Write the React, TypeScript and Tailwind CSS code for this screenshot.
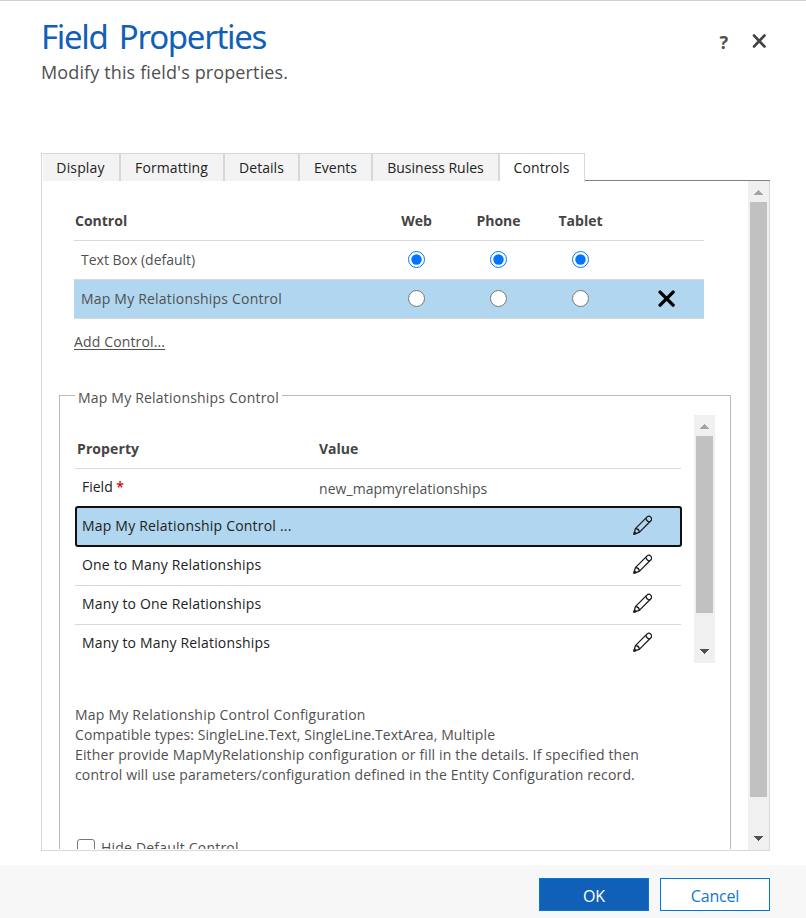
import React from "react";

function ScrollBar({ thumb, className }: { thumb: string; className: string }) {
  return (
    <div className={"flex w-[21px] shrink-0 flex-col items-center bg-[#f0f0f0] " + className}>
      <svg className="h-[21px] w-[21px] shrink-0" viewBox="0 0 21 21" shapeRendering="crispEdges">
        <path d="M6 14 L10.5 9 L15 14 Z" fill="#a3a3a3" />
      </svg>
      <div className={"w-[17px] bg-[#c1c1c1] " + thumb} />
      <svg className="mt-auto h-[21px] w-[21px] shrink-0" viewBox="0 0 21 21" shapeRendering="crispEdges">
        <path d="M6 7 L10.5 12 L15 7 Z" fill="#505050" />
      </svg>
    </div>
  );
}

function Radio({ on = false }: { on?: boolean }) {
  return (
    <span className="flex justify-center pb-px">
      <svg className="block h-[17px] w-[17px]" viewBox="0 0 17 17">
        <circle cx="8.5" cy="8.5" r="8" fill="#fff" stroke={on ? "#0075ff" : "#767676"} strokeWidth="1" />
        {on && <circle cx="8.5" cy="8.5" r="5.2" fill="#0075ff" />}
      </svg>
    </span>
  );
}

function Pencil() {
  return (
    <svg className="mb-[4px] block h-5 w-[19px]" viewBox="0 0 19 20" fill="none" stroke="#1c1c1c" strokeWidth="1.3" strokeLinejoin="round">
      <path d="M0.9 19.1 L2.4 13.6 L14.1 1.9 C16.6 -0.2 20 3.2 17.9 5.8 L6.3 17.4 Z" />
      <path d="M2.4 13.6 C4.6 13.6 6.3 15.2 6.3 17.4 M12.9 3.1 C13.2 5.4 14.5 6.7 16.8 6.9" />
      <path d="M0.9 19.1 L1.5 16.9 L3.1 18.5 Z" fill="#1c1c1c" />
    </svg>
  );
}

const tabs = [
  { label: "Display", box: "w-[76px]", text: "tracking-[0.15px] pr-px" },
  { label: "Formatting", box: "w-[102px]", text: "tracking-[0.1px] pr-px" },
  { label: "Details", box: "w-[73px]", text: "tracking-[0.05px]" },
  { label: "Events", box: "w-[71px]", text: "tracking-[0.05px]" },
  { label: "Business Rules", box: "w-[125px]", text: "tracking-[0px]" },
];

const relations = ["One to Many Relationships", "Many to One Relationships", "Many to Many Relationships"];

const columns = "grid grid-cols-[301px_82px_82px_82px_82px] items-center";

export default function App() {
  return (
    <div className="flex h-[918px] w-[806px] flex-col overflow-hidden border-t border-[#d2d2d2] bg-white font-['Open_Sans','Noto_Sans',sans-serif] text-[14px] leading-5 text-[#505050]">
      <header className="flex h-[152px] shrink-0 justify-between pl-[41px] pr-[39px]">
        <div className="pt-[13px]">
          <h1 className="whitespace-nowrap font-['Noto_Sans',sans-serif] text-[33px] leading-[46px] tracking-[-1.3px] text-[#1160b7] [word-spacing:4px]">Field Properties</h1>
          <p className="whitespace-nowrap text-[18px] leading-6 tracking-[0.13px]">Modify this field's properties.</p>
        </div>
        <div className="flex items-start pt-[33px]">
          <span className="mr-[24px] pt-px font-['Noto_Sans',sans-serif] text-[18px] font-bold leading-[15px] text-[#505050]">?</span>
          <svg className="h-[15px] w-[15px]" viewBox="0 0 15 15" stroke="#444" strokeWidth="2.6" strokeLinecap="round">
            <path d="M2 1.5 L12.5 12.5 M12.5 1.5 L2 12.5" />
          </svg>
        </div>
      </header>

      <nav className="ml-[41px] flex h-7 w-[729px] shrink-0 text-[#222]">
        <div className="flex border-l border-t border-[#d8d8d8] pl-px">
          {tabs.map((t) => (
            <div key={t.label} className="flex h-[27px] border-r-2 border-[#d8d8d8] bg-[#f3f3f3]">
              <span className={"whitespace-nowrap text-center leading-[27px] " + t.box + " " + t.text}>{t.label}</span>
            </div>
          ))}
          <div className="flex h-[28px] w-[85px] justify-center border-r border-[#d8d8d8] bg-white pr-px leading-[27px] tracking-[0.1px]">Controls</div>
        </div>
        <div className="flex-1 border-b border-[#80808c]" />
      </nav>

      <main className="ml-[41px] flex h-[670px] w-[729px] shrink-0 border-b border-l border-r border-[#d8d8d8]">
        <div className="h-[668px] flex-1 overflow-hidden">
          <section className="ml-8 w-[630px]">
            <div className={columns + " h-[60px] border-b border-[#d8d8d8] pt-5 font-bold text-[#444]"}>
              <span className="pl-px">Control</span>
              <span className="pl-px text-center">Web</span>
              <span className="pl-px text-center">Phone</span>
              <span className="pl-px text-center">Tablet</span>
            </div>
            <div className={columns + " h-[39px] border-b border-[#d8d8d8]"}>
              <span className="pl-[7px]">Text Box (default)</span>
              <Radio on />
              <Radio on />
              <Radio on />
            </div>
            <div className={columns + " h-[39px] border-b border-[#d8d8d8] bg-[#b1d6ef]"}>
              <span className="pl-[7px] tracking-[0.2px]">Map My Relationships Control</span>
              <Radio />
              <Radio />
              <Radio />
              <svg className="ml-[37px] h-[18px] w-[18px]" viewBox="0 0 18 18" stroke="#000" strokeWidth="3.4" strokeLinecap="round">
                <path d="M2.1 2.1 L15.1 15.1 M15.1 2.1 L2.1 15.1" />
              </svg>
            </div>
            <a className="mt-[13px] block w-fit whitespace-nowrap tracking-[0.14px] underline underline-offset-2">Add Control...</a>
          </section>

          <fieldset className="ml-[17px] mt-[30px] h-[480px] w-[672px] border border-[#b9b9b9] pl-[15px]">
            <legend className="h-[26px] whitespace-nowrap px-[3px] pt-[6px] leading-5 tracking-[0.2px]">Map My Relationships Control</legend>
            <div className="mt-[7px] flex h-[248px]">
              <div className="w-[607px] overflow-hidden">
                <div className="mr-px flex h-[54px] items-center border-b border-[#d8d8d8] pt-[14px] font-bold text-[#444]">
                  <span className="w-[244px] pl-[2px] tracking-[0.1px]">Property</span>
                  <span>Value</span>
                </div>
                <div className="flex h-[37px] items-center pb-[2px]">
                  <span className="w-[244px] pl-[7px] text-[#222]">Field <span className="font-semibold text-[#d40000]">*</span></span>
                  <span className="pt-1 tracking-[0.05px]">new_mapmyrelationships</span>
                </div>
                <div className="flex h-[41px] items-center justify-between rounded-[3px] border-2 border-[#101010] bg-[#b1d6ef] pl-[5px] pr-[28px] text-[#222]">
                  <span className="whitespace-nowrap pb-[2px] tracking-[0.2px]">Map My Relationship Control ...</span>
                  <Pencil />
                </div>
                {relations.map((r) => (
                  <div key={r} className="mr-px flex h-[39px] items-center justify-between border-b border-[#d8d8d8] pl-[7px] pr-[29px] text-[#222] last:border-transparent">
                    <span className="whitespace-nowrap pb-[2px] tracking-[0.17px]">{r}</span>
                    <Pencil />
                  </div>
                ))}
              </div>
              <ScrollBar className="ml-3 h-[248px]" thumb="h-[177px]" />
            </div>
            <div className="mt-[42px] whitespace-nowrap">
              <p className="tracking-[0.22px]">Map My Relationship Control Configuration</p>
              <p className="tracking-[0.09px]">Compatible types: SingleLine.Text, SingleLine.TextArea, Multiple</p>
              <p className="tracking-[0.15px]">Either provide MapMyRelationship configuration or fill in the details. If specified then</p>
              <p className="tracking-[0.14px]">control will use parameters/configuration defined in the Entity Configuration record.</p>
            </div>
            <div className="mt-[53px] flex items-start pl-[2px]">
              <span className="mt-px h-[18px] w-[18px] rounded-[3px] border border-[#767676] bg-white" />
              <span className="ml-[6px] whitespace-nowrap tracking-[0.2px]">Hide Default Control</span>
            </div>
          </fieldset>
        </div>
        <ScrollBar className="h-[669px]" thumb="h-[595px]" />
      </main>

      <footer className="mt-[14px] flex flex-1 justify-end gap-[11px] bg-[#f7f7f7] pr-9 pt-[13px] text-[16px]">
        <button className="h-[33px] w-[110px] border border-[#0078d7] bg-[#1160b7] pt-[3px] leading-[28px] text-white">OK</button>
        <button className="h-[33px] w-[110px] border border-[#0078d7] bg-white pt-[3px] leading-[28px] tracking-[-0.2px] text-[#1078d0]">Cancel</button>
      </footer>
    </div>
  );
}
